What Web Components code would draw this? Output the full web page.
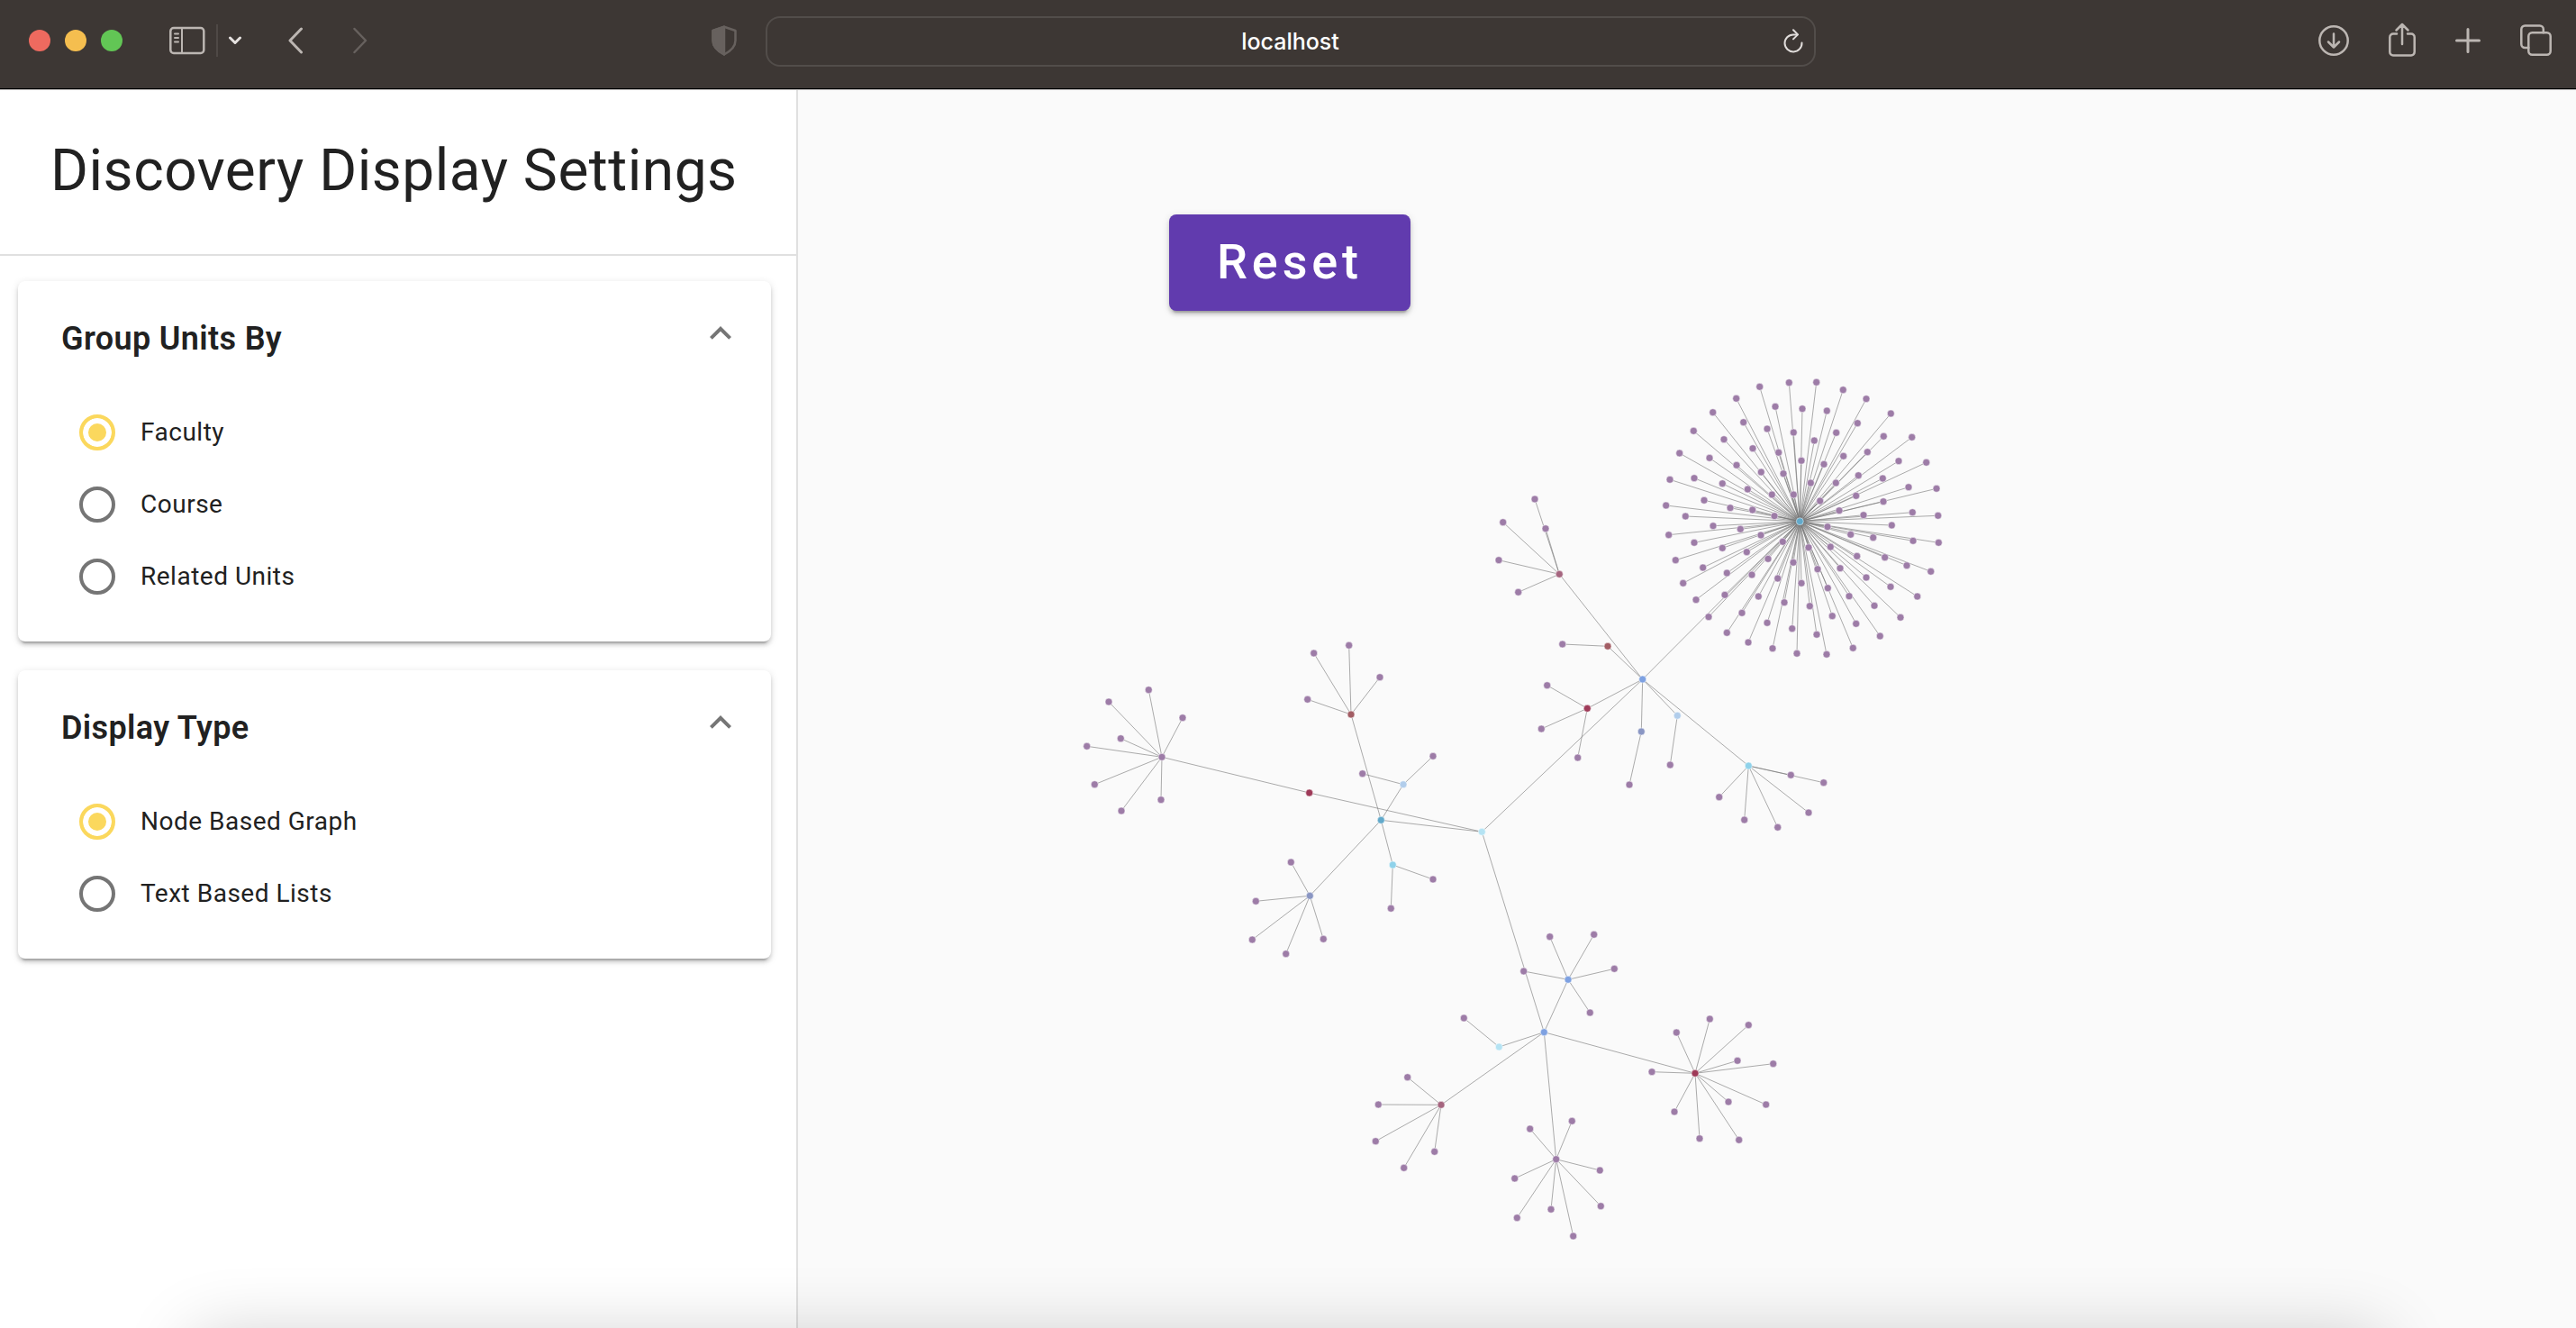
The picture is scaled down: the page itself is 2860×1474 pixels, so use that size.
<!DOCTYPE html>
<html lang="en">
<head>
<meta charset="utf-8">
<title>Discovery Display Settings</title>
<style>
  html, body { margin: 0; height: 100%; }
  body {
    display: flex;
    flex-direction: column;
    overflow: hidden;
    font-family: Roboto, "Liberation Sans", sans-serif;
    color: #212121;
    background: #fafafa;
  }
</style>
</head>
<body>
<browser-toolbar address="localhost"></browser-toolbar>
<discovery-app></discovery-app>

<script>
const shadow = (host, html) => {
  const t = document.createElement('template');
  t.innerHTML = html;
  const root = host.attachShadow({ mode: 'open' });
  root.append(t.content.cloneNode(true));
  return root;
};

class BrowserToolbar extends HTMLElement {
  connectedCallback() {
    shadow(this, `
      <style>
        :host {
          display: flex; align-items: center; flex: none; box-sizing: border-box;
          height: 100px; padding: 0 27px 7px 32px;
          background: #3d3734; border-bottom: 1px solid #bcbab9;
          box-shadow: inset 0 -1px #000; color: #bcb6b2;
        }
        .side { flex: 1 1 0; display: flex; align-items: center; padding-bottom: 2px; }
        .start { gap: 52px; }
        .end { justify-content: flex-end; gap: 44px; }
        .lights { display: flex; gap: 16px; }
        .lights i { width: 24px; height: 24px; border-radius: 50%; }
        .panes { display: flex; align-items: center; gap: 12px; }
        .panes hr { width: 2px; height: 36px; margin: 0; border: 0; background: #4f4946; }
        .history { display: flex; gap: 56px; }
        .shield { margin-left: auto; margin-right: 32px; color: #67615e; }
        button { all: unset; display: block; cursor: pointer; }
        button:disabled { color: #67615e; cursor: default; }
        svg { display: block; fill: none; stroke: currentColor; stroke-width: 2.5; stroke-linecap: round; stroke-linejoin: round; }
        .bar {
          flex: 0 1 1166px; height: 56px; box-sizing: border-box;
          display: flex; align-items: center; padding: 0 12px 0 34px;
          border: 2px solid #524d4a; border-radius: 16px; color: #e0dcda;
        }
        .bar svg { stroke-width: 2; }
        input {
          all: unset; flex: 1; min-width: 0; text-align: center;
          font: 500 25px/32px Inter, "Liberation Sans", sans-serif; color: #fff;
        }
      </style>
      <div class="side start">
        <div class="lights">
          <i style="background:#ee6a5f"></i><i style="background:#f5be4f"></i><i style="background:#62c655"></i>
        </div>
        <div class="panes">
          <button aria-label="Show sidebar">
            <svg width="40" height="32" viewBox="0 0 40 32">
              <rect x="1.3" y="2" width="37" height="28" rx="3.5"/>
              <path d="M14 2v28M6 8.500h4M6 13h4M6 17.500h4" stroke-width="2"/>
            </svg>
          </button>
          <hr>
          <button aria-label="Tab groups">
            <svg width="14" height="10" viewBox="0 0 14 10"><path stroke="#e6e2e0" stroke-width="3" d="M1.500 2L7 7.500 12.500 2"/></svg>
          </button>
        </div>
        <div class="history">
          <button aria-label="Back"><svg width="16" height="30" viewBox="0 0 16 30"><path d="M14.500 2L2 15l12.500 13" stroke-width="3"/></svg></button>
          <button aria-label="Forward" disabled><svg width="16" height="30" viewBox="0 0 16 30"><path d="M1.500 2L14 15 1.500 28"/></svg></button>
        </div>
        <button class="shield" aria-label="Privacy report">
          <svg width="28" height="34" viewBox="0 0 28 34">
            <path d="M14 1.800L26.500 6v11c0 7-5 11.500-12.500 15.500C6.500 28.500 1.500 24 1.500 17V6z"/>
            <path d="M14 1.800L1.500 6v11c0 7 5 11.500 12.500 15.500z" fill="currentColor"/>
          </svg>
        </button>
      </div>
      <div class="bar">
        <input type="text" aria-label="Address" value="${this.getAttribute('address')}">
        <button aria-label="Reload">
          <svg width="22" height="28" viewBox="0 0 22 28">
            <path d="M15.500 6.400H11A9.500 9.500 0 1 0 20.500 15.500"/>
            <path d="M11 1.200l5 5.200-5 5"/>
          </svg>
        </button>
      </div>
      <div class="side end">
        <button aria-label="Downloads">
          <svg width="34" height="34" viewBox="0 0 34 34">
            <circle cx="17" cy="17" r="15.700"/><path d="M17 9.500v15M11 18.500l6 6 6-6"/>
          </svg>
        </button>
        <button aria-label="Share">
          <svg width="30" height="40" viewBox="0 0 30 40">
            <path d="M9 12.500H5a3.700 3.700 0 0 0-3.700 3.700v16.500A3.700 3.700 0 0 0 5 36.400h20a3.700 3.700 0 0 0 3.700-3.700v-16.500a3.700 3.700 0 0 0-3.700-3.700h-4M15 24V2M8.500 8.500L15 2l6.500 6.500"/>
          </svg>
        </button>
        <button aria-label="New tab">
          <svg width="28" height="28" viewBox="0 0 28 28"><path d="M14 1.500v25M1.500 14h25" stroke-width="3"/></svg>
        </button>
        <button aria-label="Show all tabs">
          <svg width="35" height="36" viewBox="0 0 35 36">
            <rect x="9.300" y="9.300" width="24.400" height="24.400" rx="4"/>
            <path d="M9.300 26H5.300a4 4 0 0 1-4-4V5.500a4 4 0 0 1 4-4h16.500a4 4 0 0 1 4 4v3.800"/>
          </svg>
        </button>
      </div>`);
  }
}

class DiscoveryApp extends HTMLElement {
  connectedCallback() {
    shadow(this, `
      <style>
        :host { display: flex; flex: 1; min-height: 0; }
        aside { flex: 0 0 886px; box-sizing: border-box; border-right: 2px solid #e0e0e0; background: #fff; }
        h1 {
          margin: 0; padding: 50px 56px 52px; border-bottom: 2px solid #e0e0e0;
          font-size: 64px; line-height: 80px; font-weight: 400; letter-spacing: .008em; white-space: nowrap;
        }
        .cards { display: flex; flex-direction: column; gap: 32px; padding: 28px 28px 28px 20px; }
        main { flex: 1; min-width: 0; display: grid; background: #fafafa; }
        main > * { grid-area: 1 / 1; }
        .reset { justify-self: start; align-self: start; margin: 138px 0 0 412px; }
        .dock { position: fixed; left: 215px; right: 215px; top: 100%; height: 100px; margin-top: 10px; box-shadow: 0 0 80px rgba(0, 0, 0, .2); pointer-events: none; }
      </style>
      <aside>
        <h1>Discovery Display Settings</h1>
        <div class="cards">
          <settings-card heading="Group Units By">
            <radio-list label="Group Units By" name="group" options="Faculty|Course|Related Units"></radio-list>
          </settings-card>
          <settings-card heading="Display Type">
            <radio-list label="Display Type" name="display" options="Node Based Graph|Text Based Lists"></radio-list>
          </settings-card>
        </div>
      </aside>
      <main>
        <unit-graph></unit-graph>
        <raised-button class="reset">Reset</raised-button>
      </main>
      <div class="dock"></div>`);
  }
}

class SettingsCard extends HTMLElement {
  connectedCallback() {
    const root = shadow(this, `
      <style>
        :host {
          display: block; padding-bottom: 32px; background: #fff; border-radius: 8px;
          box-shadow: 0 6px 2px -4px rgba(0,0,0,.2), 0 4px 4px rgba(0,0,0,.14), 0 2px 10px rgba(0,0,0,.12);
        }
        header { display: flex; justify-content: space-between; align-items: flex-start; padding: 44px 44px 44px 48px; }
        h2 { margin: 0; font-size: 36px; line-height: 40px; font-weight: 600; letter-spacing: .01em; }
        button { all: unset; cursor: pointer; color: #757575; }
        svg { display: block; }
        button[aria-expanded="false"] svg { rotate: 180deg; }
      </style>
      <header>
        <h2>${this.getAttribute('heading')}</h2>
        <button aria-label="Toggle ${this.getAttribute('heading')}" aria-expanded="true">
          <svg width="24" height="28" viewBox="0 0 24 28"><path d="M12 6L0 18l2.800 2.800L12 11.700l9.200 9.100L24 18z" fill="currentColor"/></svg>
        </button>
      </header>
      <slot></slot>`);
    const button = root.querySelector('button');
    const slot = root.querySelector('slot');
    button.addEventListener('click', () => {
      const open = button.getAttribute('aria-expanded') !== 'true';
      button.setAttribute('aria-expanded', open);
      slot.style.display = open ? '' : 'none';
    });
  }
}

class RadioList extends HTMLElement {
  connectedCallback() {
    const name = this.getAttribute('name');
    const rows = this.getAttribute('options').split('|').map((text, i) => `
      <div class="row">
        <input type="radio" id="${name}-${i}" name="${name}" ${i ? '' : 'checked'}>
        <label for="${name}-${i}">${text}</label>
      </div>`).join('');
    shadow(this, `
      <style>
        :host { display: block; padding-left: 68px; }
        .row { display: flex; align-items: center; gap: 28px; height: 80px; }
        input {
          appearance: none; flex: none; box-sizing: border-box; width: 40px; height: 40px; margin: 0;
          border: 4px solid #757575; border-radius: 50%; background: #fff; cursor: pointer;
        }
        input:checked { border-color: #fbd85d; background: #fbd85d; box-shadow: inset 0 0 0 6px #fff; }
        label { font-size: 28px; line-height: 40px; letter-spacing: .018em; cursor: pointer; }
      </style>
      <div role="radiogroup" aria-label="${this.getAttribute('label')}">${rows}</div>`);
  }
}

class RaisedButton extends HTMLElement {
  connectedCallback() {
    shadow(this, `
      <style>
        :host { display: block; }
        button {
          display: block; margin: 0; border: 0; border-radius: 8px; height: 107px; padding: 0 53px 2px;
          background: #613bae; color: #fff; cursor: pointer;
          font: 500 54px/64px Roboto, "Liberation Sans", sans-serif; letter-spacing: .09em;
          box-shadow: 0 6px 2px -4px rgba(0,0,0,.2), 0 4px 4px rgba(0,0,0,.14), 0 2px 10px rgba(0,0,0,.12);
        }
      </style>
      <button type="button"><slot></slot></button>`);
  }
}

/* Each cluster is drawn on its own grid of thirds of a unit, placed at "at".
   A hub is [x, y, colour, [parent x, parent y], leaves "x,y x,y ..."]. */
const PURPLE = '#9d7ca7', BLUE = '#7ea1e1', TEAL = '#62a9ca', SKY = '#8fd2ea', PALE = '#b5e3f3',
      ICE = '#b1cdeb', SLATE = '#8a96c3', CRIMSON = '#9e3a58', ROSE = '#a5657f', BRICK = '#a25d64';
const CLUSTERS = [
  { at: [1820, 400], hubs: [
    [535, 536, TEAL, [11, 1062], `401,88 499,74 590,73 679,98 756,128 838,177 908,256 956,340 990,427 995,517 997,607
      971,703 926,786 870,856 802,918 712,958 624,979 525,976 444,959 363,939 292,907 231,854 189,797 146,742 121,665
      98,581 89,483 102,397 134,309 181,235 245,173 323,127 453,154 543,161 625,168 727,209 814,253 864,335 897,422
      910,506 912,601 891,683 837,754 783,817 722,877 643,851 591,913 509,893 426,874 342,841 285,781 212,690 183,607
      154,519 216,466 183,392 234,325 282,263 347,206 426,228 514,240 583,267 656,241 760,305 811,393 813,470 841,549
      818,656 779,590 756,723 699,785 628,758 568,818 483,806 397,786 292,708 277,625 246,551 303,491 277,410 324,349
      378,293 464,307 540,334 615,346 680,319 730,383 722,451 747,515 704,580 725,652 669,692 594,695 540,742 461,726
      375,714 358,638 337,562 377,498 361,429 406,372 480,377 571,408 655,408 666,500 627,554 637,621 564,623 513,673
      429,661 405,582 450,518 442,447 514,447 602,468 478,604`],
  ]},
  { at: [1630, 530], hubs: [
    [46, 1180, PALE, null, ''],
    [581, 672, BLUE, [46, 1180], ''],
    [304, 322, ROSE, [581, 672], '222,72 116,149 258,170 102,275 167,382'],
    [465, 562, BRICK, [581, 672], '314,555'],
    [397, 769, CRIMSON, [581, 672], '263,692 244,837 365,933'],
    [577, 846, SLATE, [581, 672], '537,1023'],
    [697, 793, ICE, [581, 672], '673,957'],
    [934, 960, SKY, [581, 672], '1075,991 1184,1016 1134,1116 1031,1165 920,1140 836,1064'],
  ]},
  { at: [1190, 700], hubs: [
    [1030, 631, TEAL, [1366, 670], ''],
    [791, 540, CRIMSON, [1366, 670], ''],
    [300, 421, PURPLE, [791, 540], '256,197 123,237 369,290 163,359 50,385 76,512 165,600 297,563'],
    [930, 279, BRICK, [1030, 631], '806,75 923,49 1026,155 785,229'],
    [1104, 512, ICE, [1030, 631], '968,476 1203,418'],
    [1069, 780, SKY, [1030, 631], '1203,828 1063,925'],
    [793, 883, SLATE, [1030, 631], '730,771 613,901 601,1029 713,1076 838,1027'],
  ]},
  { at: [1500, 1000], hubs: [
    [643, 437, BLUE, [436, -230], ''],
    [723, 262, BLUE, [643, 437], '662,119 809,112 575,234 877,226 796,372'],
    [493, 486, PALE, [643, 437], '376,390'],
    [300, 679, ROSE, [643, 437], '188,587 91,678 82,800 176,889 278,835'],
    [683, 860, PURPLE, [643, 437], '596,759 736,733 545,924 829,897 553,1055 666,1027 832,1016 740,1116'],
    [1146, 574, CRIMSON, [643, 437], `1084,438 1195,393 1324,413 1287,532 1406,542 1002,569 1077,702 1161,791
      1292,796 1257,669 1382,678`],
  ]},
];

class UnitGraph extends HTMLElement {
  connectedCallback() {
    let links = '', nodes = '';
    for (const { at, hubs } of CLUSTERS) {
      const place = ([x, y]) => [(at[0] + x / 3).toFixed(1), (at[1] + y / 3).toFixed(1)];
      const link = (a, b) => { links += `<path d="M${place(a)}L${place(b)}"/>`; };
      const node = (p, fill) => {
        const [x, y] = place(p);
        nodes += `<circle cx="${x}" cy="${y}" r="4" fill="${fill}"/>`;
      };
      for (const [x, y, colour, parent, leaves] of hubs) {
        if (parent) link(parent, [x, y]);
        for (const pair of leaves.split(/\s+/).filter(Boolean)) {
          const leaf = pair.split(',').map(Number);
          link([x, y], leaf);
          node(leaf, PURPLE);
        }
        node([x, y], colour);
      }
    }
    shadow(this, `
      <style>
        :host { display: block; min-width: 0; min-height: 0; }
        svg { display: block; width: 100%; height: 100%; }
        .links { stroke: #757575; stroke-opacity: .6; stroke-width: 1; }
        .nodes { stroke: #fff; stroke-opacity: .5; stroke-width: 1; }
      </style>
      <svg viewBox="886 100 1974 1374" role="img" aria-label="Node graph of units">
        <g class="links">${links}</g>
        <g class="nodes">${nodes}</g>
      </svg>`);
  }
}

customElements.define('unit-graph', UnitGraph);
customElements.define('raised-button', RaisedButton);
customElements.define('radio-list', RadioList);
customElements.define('settings-card', SettingsCard);
customElements.define('discovery-app', DiscoveryApp);
customElements.define('browser-toolbar', BrowserToolbar);
</script>
</body>
</html>
